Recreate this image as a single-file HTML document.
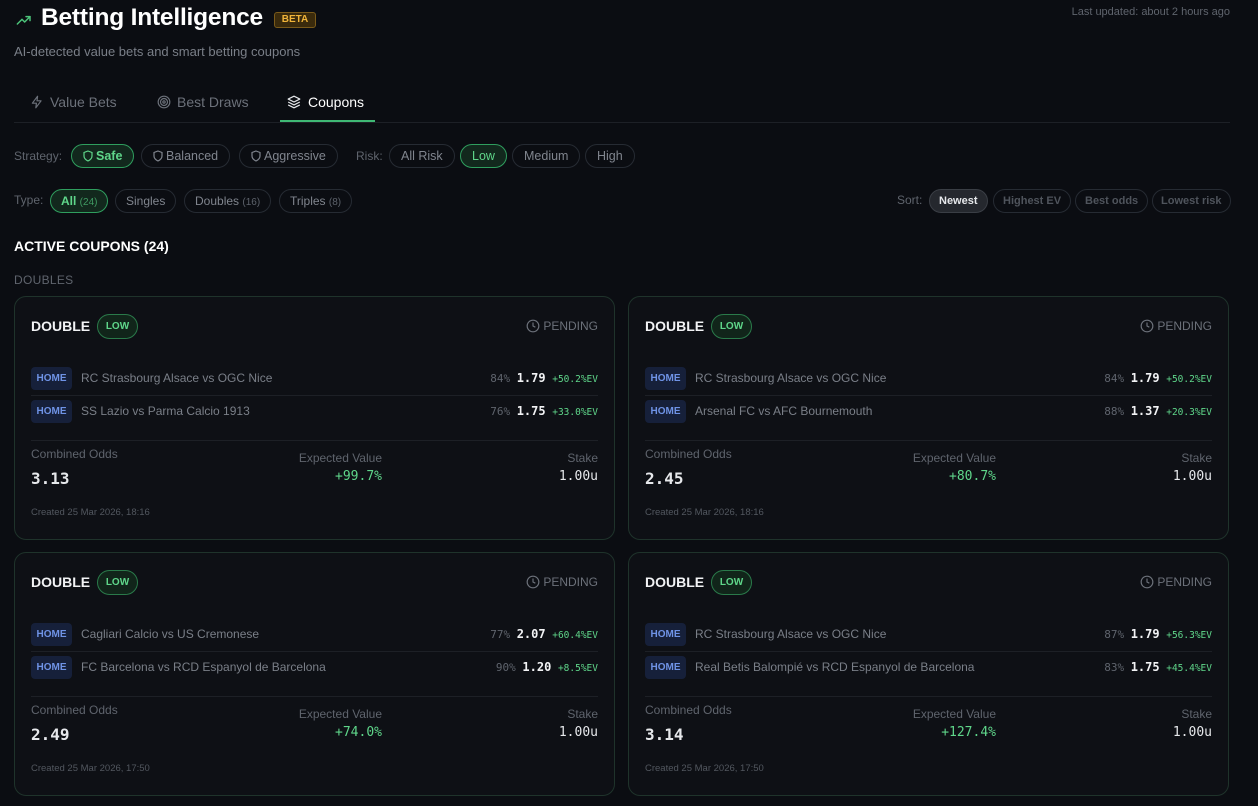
<!DOCTYPE html>
<html><head><meta charset="utf-8"><style>
*{box-sizing:border-box;margin:0;padding:0}
body{width:1258px;height:806px;background:#0b0d12;font-family:"Liberation Sans",sans-serif;color:#e6e8eb;position:relative;overflow:hidden}
.a{position:absolute;white-space:nowrap}
.mono{font-family:"DejaVu Sans Mono","Liberation Mono",monospace}
.pill{position:absolute;height:24px;border:1px solid #262b33;border-radius:12px;color:#80858e;font-size:12.5px;line-height:22px;padding:0 11px;white-space:nowrap}
.pill.on{border-color:#2f9e5e;background:#12281d;color:#5fd68a;font-weight:bold}
.pill small{font-size:10px;color:#5d626b;font-weight:normal}
.pill svg{vertical-align:-2px;margin-right:3px}
.card{position:absolute;width:601px;height:244px;border:1px solid #1f332b;border-radius:12px;background:#0e1015}
.card .t{position:absolute;left:16px;top:21px;font-weight:bold;font-size:14px;color:#f2f3f5}
.card .low{position:absolute;left:82px;top:17px;width:41px;height:25px;border:1px solid #2a7a4a;background:#11251a;border-radius:13px;color:#5fd68a;font-size:10px;font-weight:bold;text-align:center;line-height:23px}
.card .pend{position:absolute;right:16px;top:22px;font-size:12px;color:#6c717a}
.card .pend svg{vertical-align:-3px;margin-right:3px}
.leg{position:absolute;left:16px;right:16px;height:32px}
.leg .h{position:absolute;left:0;top:4px;width:41px;height:23px;background:#16203a;border-radius:4px;color:#6f93e6;font-size:10px;font-weight:bold;text-align:center;line-height:23px}
.leg .n{position:absolute;left:50px;top:8px;font-size:12px;color:#7a7f88}
.leg .r{position:absolute;right:0;top:8px;font-size:11px;color:#5f646d}
.leg .r b{color:#f2f3f5;font-size:12px}
.leg .r i{font-style:normal;color:#5fd68a;font-size:9.5px}
.sep{position:absolute;left:16px;right:16px;height:1px;background:#1d2026}
.lab{position:absolute;font-size:12px;color:#5f646d}
.val{position:absolute;font-size:14px}
</style></head><body>
<svg class="a" style="left:14px;top:12px" width="20" height="16" viewBox="0 0 24 24" fill="none" stroke="#4cc47a" stroke-width="2.2" stroke-linecap="round" stroke-linejoin="round"><path d="M2 18l7-7 4 4 8-8"/><path d="M15 7h6v6"/></svg>
<div class="a" style="left:41px;top:4px;font-size:24.5px;font-weight:bold;color:#fff;letter-spacing:-0.2px">Betting Intelligence</div>
<div class="a" style="left:274px;top:12px;width:42px;height:16px;background:#3a2a0c;border:1px solid #7a5a1a;border-radius:3px;color:#f0b43a;font-size:10px;font-weight:bold;text-align:center;line-height:14px">BETA</div>
<div class="a" style="left:14px;top:44px;font-size:13px;color:#7a7f88">AI-detected value bets and smart betting coupons</div>
<div class="a" style="right:28px;top:6px;font-size:11px;color:#5f646d">Last updated: about 2 hours ago</div>

<svg class="a" style="left:30px;top:94px" width="14" height="16" viewBox="0 0 24 24" fill="none" stroke="#6c717a" stroke-width="2" stroke-linejoin="round"><path d="M13 2L4 14h7l-1 8 9-12h-7z"/></svg>
<div class="a" style="left:50px;top:94px;font-size:14px;color:#6c717a">Value Bets</div>
<svg class="a" style="left:157px;top:95px" width="14" height="14" viewBox="0 0 24 24" fill="none" stroke="#6c717a" stroke-width="2"><circle cx="12" cy="12" r="10"/><circle cx="12" cy="12" r="6"/><circle cx="12" cy="12" r="2"/></svg>
<div class="a" style="left:177px;top:94px;font-size:14px;color:#6c717a">Best Draws</div>
<svg class="a" style="left:287px;top:95px" width="14" height="14" viewBox="0 0 24 24" fill="none" stroke="#e6e8eb" stroke-width="2" stroke-linejoin="round"><path d="M12 2l10 5-10 5-10-5z"/><path d="M2 12l10 5 10-5"/><path d="M2 17l10 5 10-5"/></svg>
<div class="a" style="left:308px;top:94px;font-size:14px;color:#fff">Coupons</div>
<div class="a" style="left:14px;top:122px;width:1216px;height:1px;background:#1d2026"></div>
<div class="a" style="left:280px;top:120px;width:95px;height:2px;background:#3fb874"></div>

<div class="a" style="left:14px;top:149px;font-size:12px;color:#5f646d">Strategy:</div>
<div class="pill on" style="left:71px;top:144px"><svg width="10" height="12" viewBox="0 0 20 24" fill="none" stroke="#5fd68a" stroke-width="2.4"><path d="M10 2l8 3v7c0 5-4 8-8 10-4-2-8-5-8-10V5z"/></svg>Safe</div>
<div class="pill" style="left:141px;top:144px"><svg width="10" height="12" viewBox="0 0 20 24" fill="none" stroke="#80858e" stroke-width="2.4"><path d="M10 2l8 3v7c0 5-4 8-8 10-4-2-8-5-8-10V5z"/></svg>Balanced</div>
<div class="pill" style="left:239px;top:144px"><svg width="10" height="12" viewBox="0 0 20 24" fill="none" stroke="#80858e" stroke-width="2.4"><path d="M10 2l8 3v7c0 5-4 8-8 10-4-2-8-5-8-10V5z"/></svg>Aggressive</div>
<div class="a" style="left:356px;top:149px;font-size:12px;color:#5f646d">Risk:</div>
<div class="pill" style="left:389px;top:144px">All Risk</div>
<div class="pill on" style="left:460px;top:144px;font-weight:normal">Low</div>
<div class="pill" style="left:512px;top:144px">Medium</div>
<div class="pill" style="left:585px;top:144px">High</div>

<div class="a" style="left:14px;top:193px;font-size:12px;color:#5f646d">Type:</div>
<div class="pill on" style="left:50px;top:189px;font-size:12px;padding:0 10px">All <small style="color:#3f9a62">(24)</small></div>
<div class="pill" style="left:115px;top:189px;font-size:12px;padding:0 10px">Singles</div>
<div class="pill" style="left:184px;top:189px;font-size:12px;padding:0 10px">Doubles <small>(16)</small></div>
<div class="pill" style="left:279px;top:189px;font-size:12px;padding:0 10px">Triples <small>(8)</small></div>
<div class="a" style="left:897px;top:193px;font-size:12px;color:#5f646d">Sort:</div>
<div class="pill" style="left:929px;top:189px;background:#25282e;border-color:#3a3e45;color:#e6e8eb;font-weight:bold;font-size:11px;padding:0 9px">Newest</div>
<div class="pill" style="left:993px;top:189px;font-size:11px;padding:0 9px;font-weight:bold;color:#4f545c">Highest EV</div>
<div class="pill" style="left:1075px;top:189px;font-size:11px;padding:0 9px;font-weight:bold;color:#4f545c">Best odds</div>
<div class="pill" style="left:1152px;top:189px;font-size:11px;padding:0 8px;font-weight:bold;color:#4f545c">Lowest risk</div>

<div class="a" style="left:14px;top:238px;font-size:14px;font-weight:bold;color:#fff">ACTIVE COUPONS (24)</div>
<div class="a" style="left:14px;top:273px;font-size:12px;color:#5f646d;letter-spacing:.3px">DOUBLES</div>

<div class="card" style="left:14px;top:296px">
<div class="t">DOUBLE</div><div class="low">LOW</div>
<div class="pend"><svg width="14" height="14" viewBox="0 0 24 24" fill="none" stroke="#6c717a" stroke-width="2"><circle cx="12" cy="12" r="10"/><path d="M12 6v6l4 2"/></svg>PENDING</div>
<div class="leg" style="top:66px"><div class="h">HOME</div><div class="n">RC Strasbourg Alsace vs OGC Nice</div><div class="r mono">84% <b>1.79</b> <i>+50.2%EV</i></div></div>
<div class="sep" style="top:98px"></div>
<div class="leg" style="top:99px"><div class="h">HOME</div><div class="n">SS Lazio vs Parma Calcio 1913</div><div class="r mono">76% <b>1.75</b> <i>+33.0%EV</i></div></div>
<div class="sep" style="top:143px"></div>
<div class="lab" style="left:16px;top:150px">Combined Odds</div>
<div class="val mono" style="left:16px;top:172px;font-size:16px;font-weight:bold">3.13</div>
<div class="lab" style="right:232px;top:154px">Expected Value</div>
<div class="val mono" style="right:232px;top:172px;color:#5fd68a;font-size:13px">+99.7%</div>
<div class="lab" style="right:16px;top:154px">Stake</div>
<div class="val mono" style="right:16px;top:172px;font-size:13px">1.00u</div>
<div class="lab" style="left:16px;top:210px;font-size:9.5px;color:#52575f">Created 25 Mar 2026, 18:16</div>
</div>

<div class="card" style="left:628px;top:296px">
<div class="t">DOUBLE</div><div class="low">LOW</div>
<div class="pend"><svg width="14" height="14" viewBox="0 0 24 24" fill="none" stroke="#6c717a" stroke-width="2"><circle cx="12" cy="12" r="10"/><path d="M12 6v6l4 2"/></svg>PENDING</div>
<div class="leg" style="top:66px"><div class="h">HOME</div><div class="n">RC Strasbourg Alsace vs OGC Nice</div><div class="r mono">84% <b>1.79</b> <i>+50.2%EV</i></div></div>
<div class="sep" style="top:98px"></div>
<div class="leg" style="top:99px"><div class="h">HOME</div><div class="n">Arsenal FC vs AFC Bournemouth</div><div class="r mono">88% <b>1.37</b> <i>+20.3%EV</i></div></div>
<div class="sep" style="top:143px"></div>
<div class="lab" style="left:16px;top:150px">Combined Odds</div>
<div class="val mono" style="left:16px;top:172px;font-size:16px;font-weight:bold">2.45</div>
<div class="lab" style="right:232px;top:154px">Expected Value</div>
<div class="val mono" style="right:232px;top:172px;color:#5fd68a;font-size:13px">+80.7%</div>
<div class="lab" style="right:16px;top:154px">Stake</div>
<div class="val mono" style="right:16px;top:172px;font-size:13px">1.00u</div>
<div class="lab" style="left:16px;top:210px;font-size:9.5px;color:#52575f">Created 25 Mar 2026, 18:16</div>
</div>

<div class="card" style="left:14px;top:552px">
<div class="t">DOUBLE</div><div class="low">LOW</div>
<div class="pend"><svg width="14" height="14" viewBox="0 0 24 24" fill="none" stroke="#6c717a" stroke-width="2"><circle cx="12" cy="12" r="10"/><path d="M12 6v6l4 2"/></svg>PENDING</div>
<div class="leg" style="top:66px"><div class="h">HOME</div><div class="n">Cagliari Calcio vs US Cremonese</div><div class="r mono">77% <b>2.07</b> <i>+60.4%EV</i></div></div>
<div class="sep" style="top:98px"></div>
<div class="leg" style="top:99px"><div class="h">HOME</div><div class="n">FC Barcelona vs RCD Espanyol de Barcelona</div><div class="r mono">90% <b>1.20</b> <i>+8.5%EV</i></div></div>
<div class="sep" style="top:143px"></div>
<div class="lab" style="left:16px;top:150px">Combined Odds</div>
<div class="val mono" style="left:16px;top:172px;font-size:16px;font-weight:bold">2.49</div>
<div class="lab" style="right:232px;top:154px">Expected Value</div>
<div class="val mono" style="right:232px;top:172px;color:#5fd68a;font-size:13px">+74.0%</div>
<div class="lab" style="right:16px;top:154px">Stake</div>
<div class="val mono" style="right:16px;top:172px;font-size:13px">1.00u</div>
<div class="lab" style="left:16px;top:210px;font-size:9.5px;color:#52575f">Created 25 Mar 2026, 17:50</div>
</div>

<div class="card" style="left:628px;top:552px">
<div class="t">DOUBLE</div><div class="low">LOW</div>
<div class="pend"><svg width="14" height="14" viewBox="0 0 24 24" fill="none" stroke="#6c717a" stroke-width="2"><circle cx="12" cy="12" r="10"/><path d="M12 6v6l4 2"/></svg>PENDING</div>
<div class="leg" style="top:66px"><div class="h">HOME</div><div class="n">RC Strasbourg Alsace vs OGC Nice</div><div class="r mono">87% <b>1.79</b> <i>+56.3%EV</i></div></div>
<div class="sep" style="top:98px"></div>
<div class="leg" style="top:99px"><div class="h">HOME</div><div class="n">Real Betis Balompié vs RCD Espanyol de Barcelona</div><div class="r mono">83% <b>1.75</b> <i>+45.4%EV</i></div></div>
<div class="sep" style="top:143px"></div>
<div class="lab" style="left:16px;top:150px">Combined Odds</div>
<div class="val mono" style="left:16px;top:172px;font-size:16px;font-weight:bold">3.14</div>
<div class="lab" style="right:232px;top:154px">Expected Value</div>
<div class="val mono" style="right:232px;top:172px;color:#5fd68a;font-size:13px">+127.4%</div>
<div class="lab" style="right:16px;top:154px">Stake</div>
<div class="val mono" style="right:16px;top:172px;font-size:13px">1.00u</div>
<div class="lab" style="left:16px;top:210px;font-size:9.5px;color:#52575f">Created 25 Mar 2026, 17:50</div>
</div>
</body></html>
